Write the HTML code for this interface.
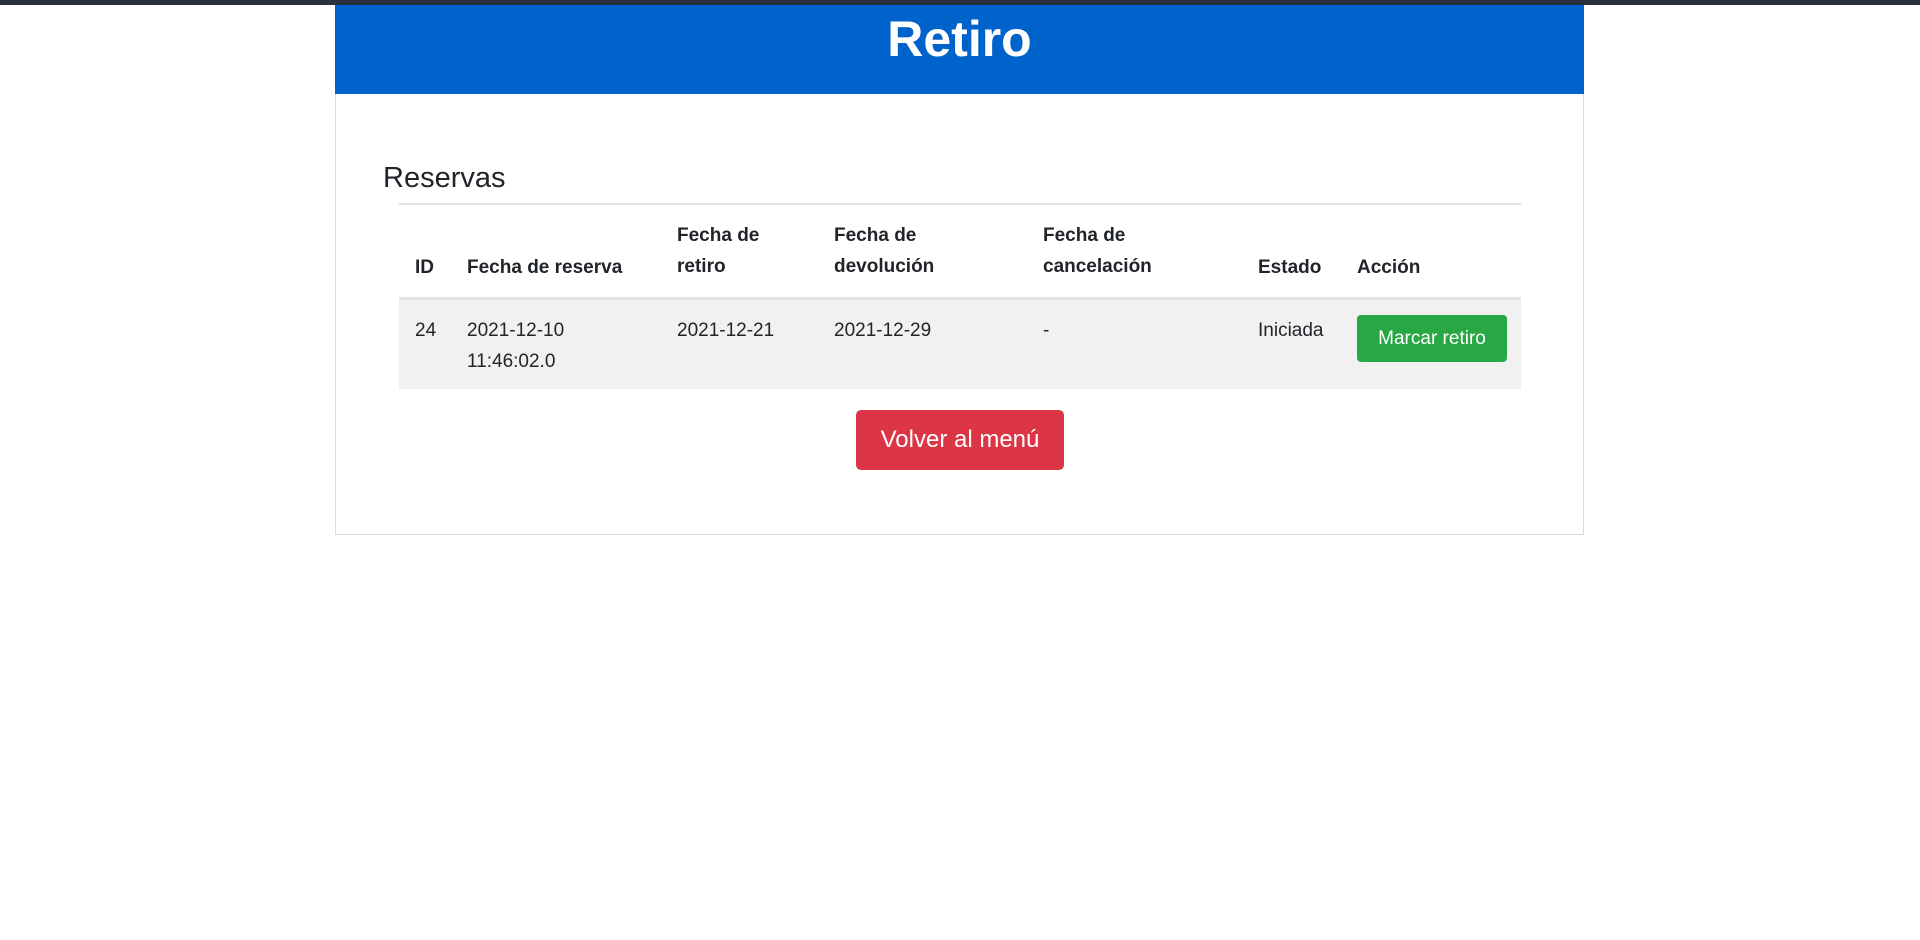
<!DOCTYPE html>
<html><head><meta charset="utf-8"><style>
*{margin:0;padding:0;box-sizing:border-box}
body{width:1920px;height:940px;background:#fff;font-family:"Liberation Sans",sans-serif;color:#212529;position:relative;overflow:hidden}
.top{position:absolute;left:0;top:0;width:1920px;height:5px;background:#2b3040;z-index:2}
.card{position:absolute;left:335px;top:0;width:1249px;height:535px;border:1px solid #dcdcdc;border-top:none}
.hdr{position:absolute;left:335px;top:5px;width:1249px;height:89px;background:#0063cc;color:#fff;font-weight:bold;font-size:50px;text-align:center;line-height:68px}
.a{position:absolute;white-space:nowrap}
h2{position:absolute;left:383px;top:162px;font-size:29px;font-weight:normal}
.hr{position:absolute;left:399px;top:203px;width:1122px;height:2px;background:#e3e3e3}
.th{font-weight:bold;font-size:19px;line-height:31px}
.td{font-size:19px;line-height:31px}
.row{position:absolute;left:399px;top:297px;width:1122px;height:92px;background:#f1f1f1;border-top:3px solid #dee2e6}
.g{position:absolute;left:1357px;top:315px;width:150px;height:47px;background:#28a745;border-radius:4px;color:#fff;font-size:19px;text-align:center;line-height:47px}
.r{position:absolute;left:856px;top:410px;width:208px;height:60px;background:#dc3545;border-radius:5px;color:#fff;font-size:24px;text-align:center;line-height:60px}
</style></head><body>
<div class="top"></div>
<div class="card"></div>
<div class="hdr">Retiro</div>
<h2>Reservas</h2>
<div class="hr"></div>
<div class="a th" style="left:415px;top:252px">ID</div>
<div class="a th" style="left:467px;top:252px">Fecha de reserva</div>
<div class="a th" style="left:677px;top:220px">Fecha de<br>retiro</div>
<div class="a th" style="left:834px;top:220px">Fecha de<br>devolución</div>
<div class="a th" style="left:1043px;top:220px">Fecha de<br>cancelación</div>
<div class="a th" style="left:1258px;top:252px">Estado</div>
<div class="a th" style="left:1357px;top:252px">Acción</div>
<div class="row"></div>
<div class="a td" style="left:415px;top:315px">24</div>
<div class="a td" style="left:467px;top:315px">2021-12-10<br>11:46:02.0</div>
<div class="a td" style="left:677px;top:315px">2021-12-21</div>
<div class="a td" style="left:834px;top:315px">2021-12-29</div>
<div class="a td" style="left:1043px;top:315px">-</div>
<div class="a td" style="left:1258px;top:315px">Iniciada</div>
<div class="g">Marcar retiro</div>
<div class="r">Volver al menú</div>
</body></html>
